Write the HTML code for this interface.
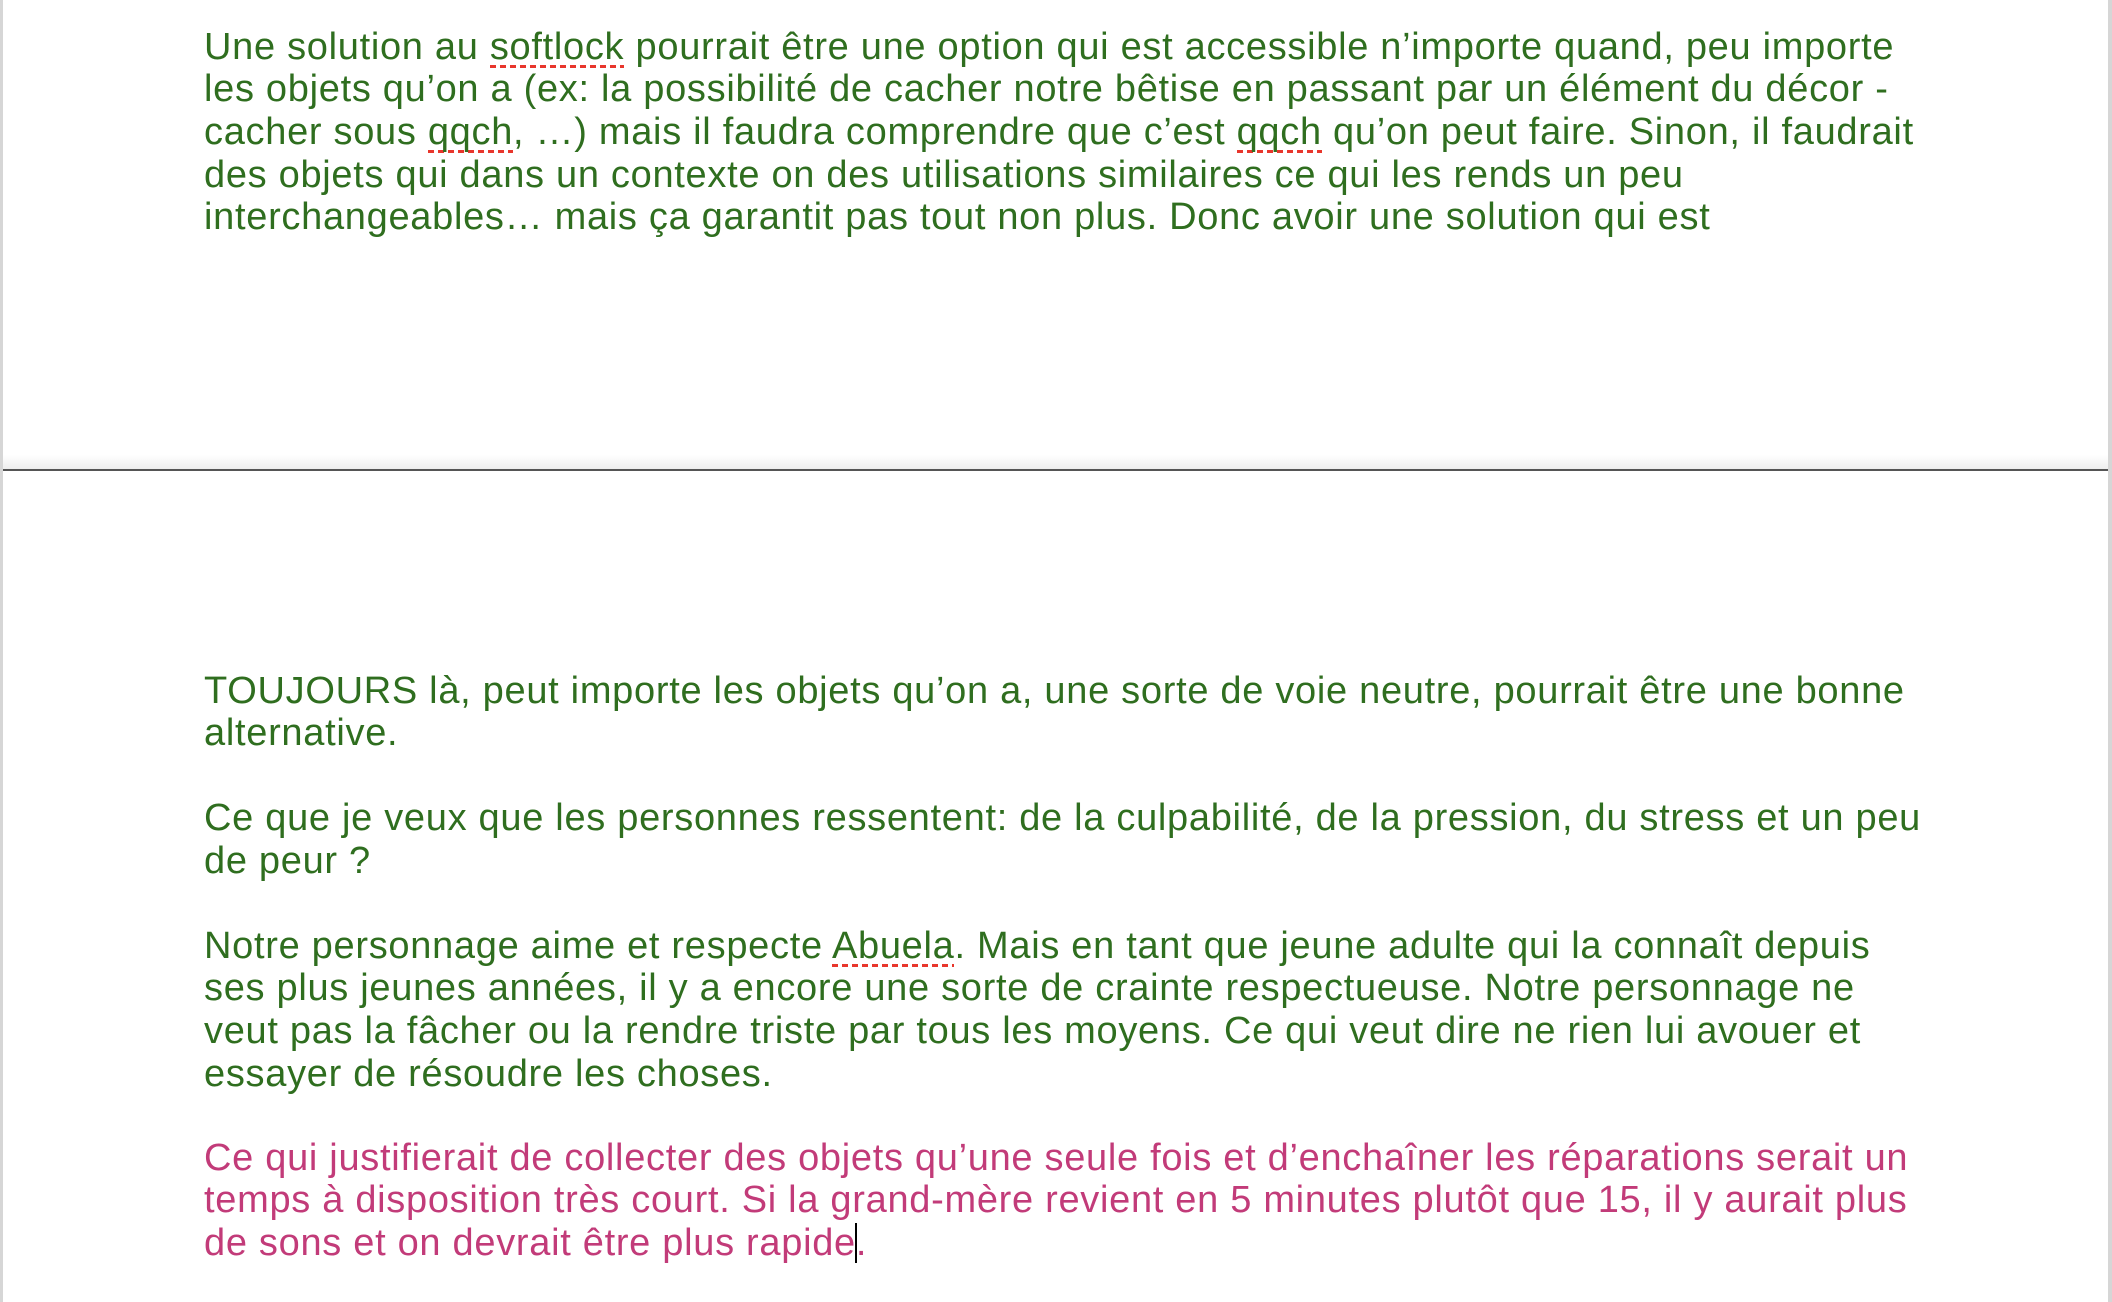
<!DOCTYPE html>
<html><head><meta charset="utf-8"><style>
html,body{margin:0;padding:0;width:2112px;height:1302px;overflow:hidden;background:#fff;position:relative}
.l{position:absolute;left:204px;white-space:nowrap;font-family:"Liberation Sans",Arial,sans-serif;font-size:38px;line-height:42px;color:#2f6e1f;letter-spacing:0.7px}
.p{color:#c23b79}
.s{background-image:linear-gradient(90deg,#e8362c 60%,transparent 60%);background-size:10px 4px;background-repeat:repeat-x;background-position:0 39px}
#lb{position:absolute;left:0;top:0;width:3px;height:1302px;background:#d6d6d6}
#rb{position:absolute;left:2108px;top:0;width:4px;height:1302px;background:#d6d6d6}
#sep{position:absolute;left:3px;top:469px;width:2105px;height:2px;background:#555}
#sh{position:absolute;left:3px;top:455px;width:2105px;height:14px;background:linear-gradient(#fff,#eee)}
.cur{display:inline-block;width:2px;height:40px;background:#000;vertical-align:-8px;margin:0 -1px}
</style></head><body>
<div id="lb"></div><div id="rb"></div><div id="sh"></div><div id="sep"></div>
<div class="l" style="top:26px">Une solution au <span class="s">softlock</span> pourrait être une option qui est accessible n’importe quand, peu importe</div>
<div class="l" style="top:68px">les objets qu’on a (ex: la possibilité de cacher notre bêtise en passant par un élément du décor -</div>
<div class="l" style="top:111px">cacher sous <span class="s">qqch</span>, …) mais il faudra comprendre que c’est <span class="s">qqch</span> qu’on peut faire. Sinon, il faudrait</div>
<div class="l" style="top:154px">des objets qui dans un contexte on des utilisations similaires ce qui les rends un peu</div>
<div class="l" style="top:196px">interchangeables… mais ça garantit pas tout non plus. Donc avoir une solution qui est</div>
<div class="l" style="top:670px">TOUJOURS là, peut importe les objets qu’on a, une sorte de voie neutre, pourrait être une bonne</div>
<div class="l" style="top:712px">alternative.</div>
<div class="l" style="top:797px">Ce que je veux que les personnes ressentent: de la culpabilité, de la pression, du stress et un peu</div>
<div class="l" style="top:840px">de peur ?</div>
<div class="l" style="top:925px">Notre personnage aime et respecte <span class="s">Abuela</span>. Mais en tant que jeune adulte qui la connaît depuis</div>
<div class="l" style="top:967px">ses plus jeunes années, il y a encore une sorte de crainte respectueuse. Notre personnage ne</div>
<div class="l" style="top:1010px">veut pas la fâcher ou la rendre triste par tous les moyens. Ce qui veut dire ne rien lui avouer et</div>
<div class="l" style="top:1053px">essayer de résoudre les choses.</div>
<div class="l p" style="top:1137px">Ce qui justifierait de collecter des objets qu’une seule fois et d’enchaîner les réparations serait un</div>
<div class="l p" style="top:1179px">temps à disposition très court. Si la grand-mère revient en 5 minutes plutôt que 15, il y aurait plus</div>
<div class="l p" style="top:1222px">de sons et on devrait être plus rapide<span class="cur"></span>.</div>
</body></html>
